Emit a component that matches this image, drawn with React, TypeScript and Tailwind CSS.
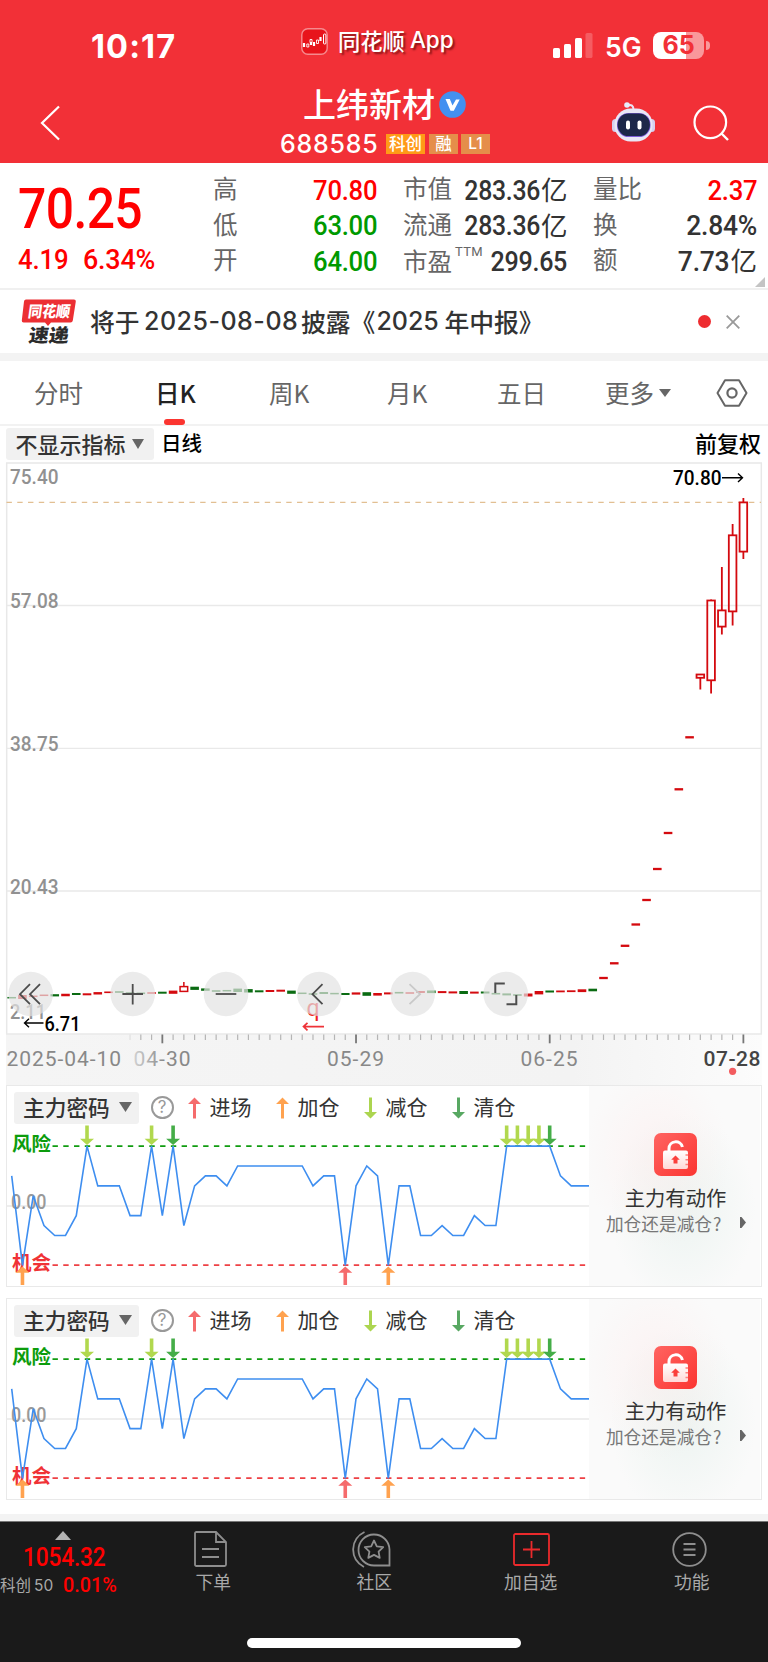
import React from 'react';

const START_X = 11.7;
const STEP = 10.76;
const RED = '#d40a0f';
const GREEN = '#0a6b12';

const xAt = (i: number) => START_X + i * STEP;

// flat part of the chart: [direction, y centre, body height]
const flatCandles: [string, number, number][] = [
  ['g', 997.7, 1.5], ['r', 997, 4], ['r', 996.3, 1.5], ['r', 995.3, 1.5], ['g', 995.3, 2.2],
  ['r', 995, 2.5], ['g', 994, 2], ['r', 994.3, 2], ['r', 993.3, 2.4], ['r', 992.3, 1.6],
  ['g', 992, 1.6], ['g', 993, 1.6], ['g', 993.3, 1.6], ['r', 993, 1.6], ['g', 992.7, 2],
  ['r', 992.2, 3.2], ['u', 989, 5], ['g', 988.3, 3.2], ['g', 989.6, 2.4], ['g', 991, 1.6],
  ['g', 990.7, 1.5], ['g', 990.3, 3.4], ['g', 990.8, 3.4], ['g', 991.3, 2], ['r', 991, 2],
  ['r', 990.7, 2], ['g', 992.2, 3.2], ['g', 993.3, 1.5], ['g', 994, 1.5], ['g', 993, 2],
  ['g', 993.6, 1.5], ['g', 994, 2], ['r', 993.5, 2.2], ['g', 994, 3.6], ['r', 994.3, 2.6],
  ['r', 993.4, 2], ['g', 992.7, 1.6], ['r', 993, 1.6], ['r', 992, 2], ['g', 991.8, 2.6],
  ['r', 992.1, 2], ['r', 992.4, 2], ['g', 992.5, 3], ['r', 992.6, 2], ['g', 992.5, 2],
  ['g', 993.7, 1.6], ['g', 994.4, 2], ['g', 995, 1.6], ['r', 995, 3], ['r', 992.7, 3.4],
  ['g', 991.5, 2], ['r', 991.4, 1.8], ['r', 991.2, 1.8], ['r', 990.7, 2.8], ['g', 990, 2.6],
  ['r', 978, 2.3], ['r', 963.3, 2.3], ['r', 945.8, 2.3], ['r', 924.5, 2.3], ['r', 900, 2.3],
  ['r', 869, 2.3], ['r', 833, 2.3], ['r', 789.3, 2.3], ['r', 737.3, 2.3],
];

// [index, high, body top, body bottom, low]
const tallCandles: number[][] = [
  [64, 674.3, 674.5, 677.8, 689.5],
  [65, 599.5, 600.5, 680.3, 693.6],
  [66, 567, 610.4, 626.6, 634.5],
  [67, 524, 535.3, 611.4, 625.6],
  [68, 498, 502.4, 551.6, 559],
];

const levels = [
  3, -6, 1, -2, -3, -3, -1, 6, 2, 2, 2, -1, -1, 6, -1, 6, -2, 2, 3, 3, 2, 4, 4, 4, 4, 4, 4, 4, 2,
  3, 3, -6, 2, 4, 3, -6, 2, 2, -3, -3, -2, -3, -3, -1, -2, -2, 6, 6, 6, 6, 6, 3, 2, 2, 2,
];

const Down = ({ x, y, color }: { x: number; y: number; color: string }) => (
  <path d={`M${x - 1.8} ${y}h3.6v13.2h5.2L${x} ${y + 19.5}L${x - 7} ${y + 13.2}h5.2z`} fill={color} />
);

const Up = ({ x, y, color }: { x: number; y: number; color: string }) => (
  <path d={`M${x} ${y}l7 6.3h-5.2v12.9h-3.6v-12.9h-5.2z`} fill={color} />
);

function LegendItem({ label, color, up }: { label: string; color: string; up?: boolean }) {
  return (
    <div className="flex w-[88px] items-center">
      <svg width="13" height="22" viewBox="0 0 13 22" className={up ? 'mr-[9px]' : 'mr-[9px] rotate-180'}>
        <path d="M6.5 0.5L13 7H8v14.5H5V7H0z" fill={color} />
      </svg>
      <span className="-mt-[4px] text-[21px] leading-[30px] text-[#333]">{label}</span>
    </div>
  );
}

function StatusBar() {
  return (
    <div className="flex h-[82px] items-start text-white">
      <div className="ml-[91px] mt-[29px] w-[210px] font-[Inter] text-[32.5px] leading-[36px] font-bold tracking-[1.1px]">10:17</div>
      <div className="mt-[27px] flex h-[28px] w-[252px] items-center">
        <svg width="27" height="27" viewBox="0 0 27 27">
          <rect x="0.8" y="0.8" width="25.4" height="25.4" rx="6" fill="#e8141b" stroke="#f58a8e" strokeWidth="1.4" />
          <path d="M3 15v4M10 14v3M13 14v4M19.5 9v4" stroke="#fff" strokeWidth="2.2" />
          <path d="M5.8 16h2v3h-2zM9 11.5h2v3H9zM15.5 12h2v3.5h-2z" fill="none" stroke="#fff" strokeWidth="0.9" />
          <rect x="22.5" y="6" width="2.4" height="10" rx="1" fill="none" stroke="#fff" />
        </svg>
        <span className="-mt-[3px] ml-[10px] text-[22.3px] leading-[28px] font-medium [text-shadow:2px_2px_2px_rgba(70,0,0,0.6)]">同花顺</span>
        <span className="-mt-[2px] ml-[5px] font-[Inter] text-[22.5px] leading-[28px] font-medium [text-shadow:2px_2px_2px_rgba(70,0,0,0.6)]">App</span>
      </div>
      <svg width="40" height="26" viewBox="0 0 40 26" className="mt-[32px]">
        <rect x="0" y="16" width="7" height="10" rx="1.6" fill="#fff" />
        <rect x="11" y="12" width="7" height="14" rx="1.6" fill="#fff" />
        <rect x="22" y="6" width="7" height="20" rx="1.6" fill="#fff" />
        <rect x="32.5" y="1" width="7" height="25" rx="1.6" fill="#f55c62" />
      </svg>
      <div className="mt-[32px] ml-[12px] w-[48px] font-[Inter] text-[26.5px] leading-[30px] font-semibold">5G</div>
      <div className="mt-[32px] flex items-center">
        <div className="flex h-[27px] w-[51px] items-center justify-center rounded-[8px] bg-linear-to-r from-white from-65% to-[#f9989b] to-65% font-[Inter] text-[25px] leading-[27px] font-bold text-[#f23037]">
          65
        </div>
        <div className="ml-[1.5px] h-[9px] w-[4px] rounded-r-full bg-[#f9989b]" />
      </div>
    </div>
  );
}

function Header() {
  return (
    <header className="h-[163px] bg-[#f23037]">
      <StatusBar />
      <div className="flex h-[81px] text-white">
        <svg width="22" height="36" viewBox="0 0 22 36" className="mt-[23px] ml-[39px]">
          <path d="M20 1.5L3 18l17 16.5" fill="none" stroke="#fff" strokeWidth="2.2" />
        </svg>
        <div className="ml-[219px] w-[332px]">
          <div className="flex h-[44px] items-center">
            <span className="-mt-[2px] ml-[23px] text-[33px] leading-[42px] font-medium">上纬新材</span>
            <svg width="27" height="27" viewBox="0 0 27 27" className="ml-[4px]">
              <circle cx="13.5" cy="13.5" r="13.3" fill="#4390f0" />
              <path d="M6.5 8h4.3l2.7 6.5L17 8.5h3.7L14.8 19.8h-3.3z" fill="#fff" />
            </svg>
          </div>
          <div className="flex h-[36px] items-center">
            <span className="w-[106px] font-[Inter] text-[25px] leading-[30px] font-medium tracking-[0.75px]">688585</span>
            <span className="flex h-[20px] w-[39px] items-center justify-center bg-[#ff9a17] pb-px text-[16.5px] font-medium">科创</span>
            <span className="ml-[4px] flex h-[20px] w-[29px] items-center justify-center bg-[#e58e4a] pb-px text-[16.5px] font-medium">融</span>
            <span className="ml-[3px] flex h-[20px] w-[29px] items-center justify-center bg-[#e58e4a] font-[Inter] text-[15.5px] font-medium">L1</span>
          </div>
        </div>
        <svg width="44" height="40" viewBox="0 0 44 40" className="mt-[20px]">
          <path d="M15.5 3.5c4-1.6 6 0.5 6 4" fill="none" stroke="#e9e4f5" strokeWidth="2" />
          <circle cx="15" cy="3" r="2.8" fill="#e6eefc" />
          <rect x="0" y="17" width="7" height="13" rx="3.5" fill="#d5d0f0" />
          <rect x="36" y="17" width="7" height="13" rx="3.5" fill="#d5d0f0" />
          <rect x="2.5" y="6.5" width="38" height="33" rx="16" fill="#e9e7f6" />
          <rect x="5" y="11" width="33.5" height="24" rx="11.5" fill="#7c5cd8" />
          <rect x="5.6" y="11.6" width="32.3" height="22.5" rx="11" fill="#1d2749" />
          <rect x="14" y="18.5" width="4" height="9" rx="2" fill="#fff" />
          <rect x="25.5" y="18.5" width="4" height="9" rx="2" fill="#fff" />
        </svg>
        <svg width="36" height="36" viewBox="0 0 36 36" className="mt-[23px] ml-[37px]">
          <circle cx="17.3" cy="17.3" r="15.8" fill="none" stroke="#fff" strokeWidth="2.2" />
          <path d="M28.5 28.5L35 35" stroke="#fff" strokeWidth="2.4" />
        </svg>
      </div>
    </header>
  );
}

interface RowProps {
  label: string;
  value: string;
  unit?: string;
  color?: string;
  sup?: string;
  scale?: string;
}

function Row({ label, value, unit, color = 'text-[#333]', sup, scale = 'scale-x-[0.9]' }: RowProps) {
  return (
    <div className="flex h-[35.5px] items-center justify-between whitespace-nowrap">
      <span className="flex shrink-0 text-[24.5px] text-[#666]">
        <span className={sup ? 'mt-[3px]' : '-mt-[1px]'}>{label}</span>
        {sup && <sup className="top-0 ml-[3px] text-[13px] leading-[20px] tracking-[0.3px]">{sup}</sup>}
      </span>
      <span className={`-ml-4 flex items-center text-[28.5px] font-medium ${color}`}>
        <span className={`inline-block origin-right tracking-[-0.3px] ${scale}`}>{value}</span>
        {unit && <span className="ml-px text-[26.5px] font-normal">{unit}</span>}
      </span>
    </div>
  );
}

function Quote() {
  return (
    <section className="flex h-[127px] border-b-2 border-[#f0f0f0] pt-[10.5px] font-[Roboto,Noto_Sans_CJK_SC,sans-serif]">
      <div className="w-[213px] pl-[18px] text-[#ff0000]">
        <div className="mt-[2px] h-[66px] origin-left scale-x-[0.89] text-[56px] leading-[66px] font-medium tracking-[-0.7px]">70.25</div>
        <div className="flex h-[36px] items-center text-[28px] font-medium tracking-[-0.2px]">
          <span className="w-[65px] origin-left scale-x-[0.92]">4.19</span>
          <span className="origin-left scale-x-[0.96]">6.34%</span>
        </div>
      </div>
      <div className="w-[164.5px]">
        <Row label="高" value="70.80" color="text-[#ff0000]" />
        <Row label="低" value="63.00" color="text-[#009900]" />
        <Row label="开" value="64.00" color="text-[#009900]" />
      </div>
      <div className="ml-[25.5px] w-[164.5px]">
        <Row label="市值" value="283.36" unit="亿" scale="scale-x-[0.87]" />
        <Row label="流通" value="283.36" unit="亿" scale="scale-x-[0.87]" />
        <Row label="市盈" value="299.65" sup="TTM" scale="scale-x-[0.88]" />
      </div>
      <div className="ml-[25.5px] w-[164px]">
        <Row label="量比" value="2.37" color="text-[#ff0000]" />
        <Row label="换" value="2.84%" scale="scale-x-[0.93]" />
        <Row label="额" value="7.73" unit="亿" scale="scale-x-[0.93]" />
      </div>
      <svg width="10" height="10" viewBox="0 0 10 10" className="mt-[103px] -ml-[2px] shrink-0">
        <path d="M10 0v10H0z" fill="#c4c4c4" />
      </svg>
    </section>
  );
}

function News() {
  return (
    <section className="flex h-[63px] items-center">
      <svg width="56" height="50" viewBox="0 0 56 50" className="ml-[21px] font-[Noto_Sans_CJK_SC]">
        <path d="M5 2.5h48q2 0 1.8 2l-3 19q-0.3 2-2.3 2H30l-3 3.5l-3-3.5H2.6q-2 0-1.8-2l2.2-19q0.2-2 2-2z" fill="#ec2f33" />
        <text transform="translate(6.5 20) skewX(-8)" fontSize="15.5" fontWeight="900" textLength="42" lengthAdjust="spacingAndGlyphs" fill="#fff">同花顺</text>
        <text transform="translate(7 45) skewX(-8)" fontSize="18.5" fontWeight="900" textLength="40" lengthAdjust="spacingAndGlyphs" fill="#2b2b2b">速递</text>
      </svg>
      <div className="ml-[13px] flex w-[608px] items-center text-[24.8px] font-medium whitespace-nowrap text-[#333]">
        <span className="w-[54px]">将于</span>
        <span className="w-[157px] font-[Inter] text-[25px] tracking-[0.5px]">2025-08-08</span>
        <span>披露</span>
        <span>《</span>
        <span className="ml-[1px] w-[68px] font-[Inter] text-[25px]">2025</span>
        <span>年中报》</span>
      </div>
      <div className="size-[12.5px] rounded-full bg-[#ee2c30]" />
      <svg width="14" height="14" viewBox="0 0 14 14" className="ml-[15px]">
        <path d="M0.7 0.7l12.6 12.6M13.3 0.7L0.7 13.3" stroke="#999" strokeWidth="1.8" />
      </svg>
    </section>
  );
}

function Tabs() {
  return (
    <nav className="flex h-[65px] items-center border-b-2 border-[#f2f2f2] pt-px text-[24.5px] text-[#666]">
      <span className="ml-[34px] w-[121px]">分时</span>
      <span className="relative w-[114px] font-medium text-[#222]">
        日K
        <span className="absolute top-[44px] left-[8.5px] h-[6px] w-[21px] rounded-full bg-[#fb3530]" />
      </span>
      <span className="w-[118px]">周K</span>
      <span className="w-[110px]">月K</span>
      <span className="w-[108px]">五日</span>
      <span className="w-[54px]">更多</span>
      <svg width="12" height="8" viewBox="0 0 12 8">
        <path d="M0 0h12L6 8z" fill="#666" />
      </svg>
      <svg width="32" height="28" viewBox="0 0 32 28" className="ml-[45px]">
        <path d="M9 1.2h14L30.5 14L23 26.8H9L1.5 14z" fill="none" stroke="#666" strokeWidth="2" strokeLinejoin="round" />
        <circle cx="16" cy="14" r="4.6" fill="none" stroke="#666" strokeWidth="2.2" />
      </svg>
    </nav>
  );
}

function IndicatorBar() {
  return (
    <div className="flex h-[36px] items-center font-medium">
      <div className="ml-[6px] flex h-[32px] w-[148px] items-center rounded-[3px] bg-[#f1f1f1] pl-[9.5px] text-[22px] text-[#333]">
        <span className="-mt-[2px]">不显示指标</span>
        <svg width="12" height="10" viewBox="0 0 12 10" className="ml-[6px]">
          <path d="M0 0h12L6 10z" fill="#666" />
        </svg>
      </div>
      <span className="-mt-[3px] ml-[7px] w-[534px] text-[20.5px] text-black">日线</span>
      <span className="-mt-[3px] text-[22px] text-black">前复权</span>
    </div>
  );
}

function KLineChart() {
  const ticks = Array.from({ length: 58 }, (_, k) => k + 11);
  const circles = [30.7, 132.7, 226, 319.3, 412.7, 505.7];
  return (
    <svg width="768" height="623" viewBox="0 462 768 623" className="block font-[Roboto]">
      <defs>
        <linearGradient id="axis" x1="0" x2="1" y1="0" y2="0">
          <stop offset="0" stopColor="#f5f5f5" />
          <stop offset="0.75" stopColor="#f3f3f3" />
          <stop offset="1" stopColor="#fcfcfc" />
        </linearGradient>
        <linearGradient id="fade" gradientUnits="userSpaceOnUse" x1="134" x2="165" y1="0" y2="0">
          <stop offset="0" stopColor="#d0d0d0" />
          <stop offset="1" stopColor="#888" />
        </linearGradient>
      </defs>
      <rect x="6" y="1034" width="756" height="51" fill="url(#axis)" />
      <path d="M6.7 1034V463H761.3V1034" fill="none" stroke="#e8e8e8" strokeWidth="1.5" />
      <path d="M6 1034H762M7 605.5H761M7 748.3H761M7 891H761" stroke="#e9e9e9" strokeWidth="1.3" />
      <path d="M6.5 502.4H761" stroke="#e2bf92" strokeWidth="1.3" strokeDasharray="5.4 5.36" />

      <g fontSize="20" fontWeight="500" fill="#919191">
        <text x="10" y="483.5" textLength="48.5" lengthAdjust="spacingAndGlyphs">75.40</text>
        <text x="10" y="608" textLength="48.5" lengthAdjust="spacingAndGlyphs">57.08</text>
        <text x="10" y="751" textLength="48.5" lengthAdjust="spacingAndGlyphs">38.75</text>
        <text x="10" y="894" textLength="48.5" lengthAdjust="spacingAndGlyphs">20.43</text>
        <text x="10" y="1019.3" textLength="36" lengthAdjust="spacingAndGlyphs">2.11</text>
      </g>

      {flatCandles.map(([dir, y, h], i) =>
        dir === 'u' ? (
          <g key={i} stroke={RED} fill="none" strokeWidth="1.5">
            <rect x={xAt(i) - 3.8} y={y - 2.4} width="7.6" height="4.8" />
            <path d={`M${xAt(i)} 982V986.5`} />
          </g>
        ) : (
          <rect key={i} x={xAt(i) - 4.3} y={y - h / 2} width="8.6" height={h} fill={dir === 'g' ? GREEN : RED} />
        )
      )}
      {tallCandles.map(([i, high, top, bottom, low]) => (
        <g key={i} stroke={RED} fill="none" strokeWidth="1.8">
          <rect x={xAt(i) - 3.8} y={top} width="7.6" height={bottom - top} />
          <path d={`M${xAt(i)} ${high}V${top}M${xAt(i)} ${bottom}V${low}`} />
        </g>
      ))}

      <text x="306.5" y="1015.5" fontSize="23" fill="#f01c22">q</text>

      {circles.map((cx) => (
        <circle key={cx} cx={cx} cy="994" r="22.3" fill="#e2e2e2" fillOpacity="0.7" />
      ))}
      <g fill="none" stroke="#4d4d4d" strokeWidth="1.8">
        <path d="M30 984.2L20 994.2L30 1004.2M40 984.2L30 994.2L40 1004.2" />
        <path d="M122.4 994H143M132.7 984V1004.5" />
        <path d="M215.7 994H236.3" />
        <path d="M322.5 984.2L312.5 994.2L322.5 1004.2" />
        <path d="M409.5 984.2L420 994.2L409.5 1004.2" stroke="#c9c9c9" />
        <path d="M495.3 993V983.5H504.8M516.3 995V1004.3H506.5" strokeWidth="2" />
      </g>

      <path d="M324 1026.6H303.5M307.5 1022.8L303.5 1026.6L307.5 1030.4" stroke="#ee3338" strokeWidth="1.7" fill="none" />
      <g stroke="#000" strokeWidth="1.4" fill="none">
        <path d="M43.5 1023H24.5M29 1018.7L24.5 1023L29 1027.3" />
        <path d="M722 477.8H742.5M738 473.5L742.5 477.8L738 482.1" />
      </g>
      <text x="44.5" y="1030.6" fontSize="20.5" fontWeight="500" textLength="36" lengthAdjust="spacingAndGlyphs">6.71</text>
      <text x="673" y="485" fontSize="20.5" fontWeight="500" textLength="48.5" lengthAdjust="spacingAndGlyphs">70.80</text>

      {ticks.map((i) => {
        const major = i === 14 || i === 32 || i === 50 || i === 68;
        return (
          <path
            key={i}
            d={`M${xAt(i)} 1034.5v${major ? 8.8 : 5.5}`}
            stroke={major ? '#777' : i < 12 ? '#e0e0e0' : '#b5b5b5'}
            strokeWidth={major ? 1.8 : 1.2}
          />
        );
      })}
      <g fontSize="21" fill="#888">
        <text x="6.5" y="1065.6" textLength="114.5">2025-04-10</text>
        <text x="133.5" y="1065.6" textLength="57" fill="url(#fade)">04-30</text>
        <text x="327" y="1065.6" textLength="57">05-29</text>
        <text x="520.5" y="1065.6" textLength="57">06-25</text>
        <text x="703.5" y="1065.6" textLength="57" fill="#444" fontWeight="500">07-28</text>
      </g>
      <circle cx="732.6" cy="1071.3" r="3.6" fill="#f35c5f" />
    </svg>
  );
}

function SignalPanel() {
  const sx = (i: number) => xAt(i) - 7;
  const points = levels.map((v, i) => `${sx(i)},${80.7 - v * 9.93}`).join(' ');
  return (
    <section className="ml-[6px] flex h-[202px] w-[756px] border-[1.5px] border-[#e9e9e9]">
      <div className="w-[582px]">
        <div className="flex h-[44px] items-center">
          <div className="ml-[6.5px] flex h-[32px] w-[125px] items-center rounded-[3px] bg-[#f1f1f1] pl-[9.5px] text-[21.7px] font-medium text-[#333]">
            <span className="-mt-[2px]">主力密码</span>
            <svg width="13" height="10" viewBox="0 0 13 10" className="-mt-[2px] ml-[9px]">
              <path d="M0 0h13L6.5 10z" fill="#666" />
            </svg>
          </div>
          <div className="mr-[14px] ml-[12px] -mt-[1px] flex size-[23px] items-center justify-center rounded-full border-2 border-[#999] font-[Inter] text-[17px] leading-none text-[#999]">
            ?
          </div>
          <LegendItem label="进场" color="#f56b6c" up />
          <LegendItem label="加仓" color="#ffa24f" up />
          <LegendItem label="减仓" color="#acd550" />
          <LegendItem label="清仓" color="#58a862" />
        </div>
        <svg width="582" height="160" viewBox="0 0 582 160" className="-mt-[5px] block font-[Roboto]">
          <path d="M0 81H582" stroke="#e9e9e9" strokeWidth="1.3" />
          <text x="4" y="83.5" fontSize="20" fontWeight="500" fill="#999" textLength="35.5" lengthAdjust="spacingAndGlyphs">0.00</text>
          <text x="5" y="26" fontSize="19.5" fontWeight="700" fill="#0c9c0c" className="font-[Noto_Sans_CJK_SC]">风险</text>
          <text x="5" y="145" fontSize="19.5" fontWeight="700" fill="#f03236" className="font-[Noto_Sans_CJK_SC]">机会</text>
          <path d="M45.5 21.2H579" stroke="#109c10" strokeWidth="1.8" strokeDasharray="5.4 5.36" />
          <path d="M45.5 140.2H579" stroke="#ee4044" strokeWidth="1.8" strokeDasharray="5.4 5.36" />
          <polyline points={points} fill="none" stroke="#3e8ef0" strokeWidth="1.6" />
          {[7, 13, 46, 47, 48, 49].map((i) => (
            <Down key={i} x={sx(i)} y={0.5} color="#b1d84e" />
          ))}
          {[15, 50].map((i) => (
            <Down key={i} x={sx(i)} y={0.5} color="#45ad48" />
          ))}
          <Up x={sx(1)} y={141.5} color="#ffa24f" />
          <Up x={sx(31)} y={141.5} color="#f56b6c" />
          <Up x={sx(35)} y={141.5} color="#ffa24f" />
        </svg>
      </div>
      <div className="flex w-[171px] flex-col items-center bg-[#fafafa] bg-[radial-gradient(ellipse_at_40%_35%,rgba(255,228,228,0.35),transparent_50%),radial-gradient(ellipse_at_55%_62%,rgba(228,240,235,0.6),transparent_55%)]">
        <svg width="43" height="43" viewBox="0 0 43 43" className="mt-[47px] ml-[2px]">
          <defs>
            <linearGradient id="lock" x1="0" x2="1" y1="0" y2="1">
              <stop offset="0" stopColor="#ff6461" />
              <stop offset="1" stopColor="#fb3531" />
            </linearGradient>
            <linearGradient id="body" x1="0" x2="0" y1="0" y2="1">
              <stop offset="0" stopColor="#fff" />
              <stop offset="1" stopColor="#ffd9d8" />
            </linearGradient>
          </defs>
          <rect width="43" height="43" rx="7" fill="url(#lock)" />
          <path d="M15 18v-2.5a6.8 6.8 0 0 1 13.4-1.5" fill="none" stroke="#fff" strokeWidth="3" />
          <rect x="9" y="17.5" width="25" height="18.5" rx="2" fill="url(#body)" />
          <path d="M21.5 22.5l4.3 4.3h-2.3v3.7h-4v-3.7h-2.3z" fill="#fb3f3c" />
          <path d="M31.5 22h2.5M31.5 26.7h2.5M31.5 31.5h2.5" stroke="#ff7f7c" strokeWidth="1.5" />
        </svg>
        <div className="mt-[6.5px] ml-[2px] text-[20.3px] leading-[28px] text-[#333]">主力有动作</div>
        <div className="flex items-center pl-[3px] text-[17.7px] leading-[24px] text-[#777]">
          加仓还是减仓<span className="w-[28px] pl-px">?</span>
          <svg width="6" height="11" viewBox="0 0 6 11">
            <path d="M0 0h1.5L6 5.5L1.5 11H0z" fill="#666" />
          </svg>
        </div>
      </div>
    </section>
  );
}

function BottomNav() {
  return (
    <footer className="h-[141px] border-t border-[#777] bg-[#1a1a1a] text-[17.8px] text-[#a9a9a9]">
      <div className="flex h-[116px]">
        <div className="w-[194px] pt-[9px]">
          <svg width="16" height="9" viewBox="0 0 16 9" className="ml-[55px]">
            <path d="M8 0l8 9H0z" fill="#b3b3b3" />
          </svg>
          <div className="mt-[3px] ml-[23px] h-[29px] origin-left scale-x-[0.89] font-[Roboto] text-[25.5px] leading-[29px] font-medium tracking-[-0.2px] text-[#ff0000]">1054.32</div>
          <div className="flex h-[27px] items-center">
            <span className="w-[63px] text-[15.5px]">
              科创<span className="ml-[3px] font-[Inter] text-[15.5px]">50</span>
            </span>
            <span className="origin-left scale-x-[0.94] font-[Roboto] text-[21px] font-medium text-[#ff0000]">0.01%</span>
          </div>
        </div>
        <div className="w-[158px] pt-[9px]">
          <svg width="33" height="36" viewBox="0 0 33 36" fill="none" stroke="#8e8e8e" strokeWidth="1.8">
            <path d="M1 2.5q0-1.5 1.5-1.5H22l10 10v22.5q0 1.5-1.5 1.5H2.5q-1.5 0-1.5-1.5zM22 1v10h10M8 18h17M8 26h17" />
          </svg>
          <div className="mt-px ml-[1.5px] leading-[26px]">下单</div>
        </div>
        <div className="w-[152px] pt-[9px]">
          <svg width="39" height="37" viewBox="0 0 39 37" fill="none" stroke="#8e8e8e" strokeWidth="1.8">
            <path d="M12.5 1C-2 8-3 28 12 36" />
            <path d="M37.5 34.5V18.5a15.5 15.5 0 1 0-15.5 16z" />
            <path d="M22 9.5l2.8 5.8 6.4 0.9-4.6 4.4 1.1 6.3L22 23.9l-5.7 3 1.1-6.3-4.6-4.4 6.4-0.9z" strokeLinejoin="round" />
          </svg>
          <div className="ml-[4.5px] leading-[26px]">社区</div>
        </div>
        <div className="w-[169px] pt-[11px]">
          <svg width="37" height="33" viewBox="0 0 37 33" fill="none" stroke="#ea2a2c" strokeWidth="1.8" className="ml-[9px]">
            <rect x="1" y="1" width="35" height="31" rx="1.5" />
            <path d="M10 16.5h17M18.5 8v17" />
          </svg>
          <div className="mt-[2px] leading-[26px]">加自选</div>
        </div>
        <div className="pt-[10px]">
          <svg width="35" height="35" viewBox="0 0 35 35" fill="none" stroke="#8e8e8e" strokeWidth="1.8" className="-ml-px">
            <circle cx="17.5" cy="17.5" r="16.3" />
            <path d="M11.5 12h12M11.5 17.5h12M11.5 23h12" />
          </svg>
          <div className="mt-px ml-px leading-[26px]">功能</div>
        </div>
      </div>
      <div className="mx-auto h-[10px] w-[274px] rounded-full bg-white" />
    </footer>
  );
}

export default function App() {
  return (
    <div className="h-[1662px] w-[768px] overflow-hidden bg-white font-['Noto_Sans_CJK_SC',sans-serif] leading-normal">
      <Header />
      <Quote />
      <News />
      <div className="h-[8px] bg-[#f3f3f3]" />
      <Tabs />
      <IndicatorBar />
      <KLineChart />
      <SignalPanel />
      <div className="h-[11px]" />
      <SignalPanel />
      <div className="h-[14px]" />
      <div className="h-[7px] bg-[#f3f3f3]" />
      <BottomNav />
    </div>
  );
}
